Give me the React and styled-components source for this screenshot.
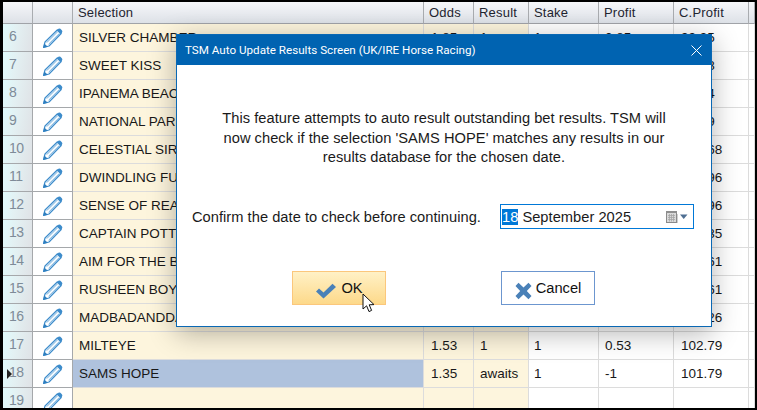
import React from "react";
import styled, { createGlobalStyle } from "styled-components";

const GlobalStyle = createGlobalStyle`
  html, body {
    margin: 0;
    padding: 0;
    background: #000;
  }
  body {
    font-family: "Liberation Sans", Arial, sans-serif;
  }
`;

const COLUMNS = "30px 40px 351px 50px 55px 70px 75px 75px 1fr";

const rows = [
  { n: 6, name: "SILVER CHAMBER", odds: "1.85", result: "1", stake: "1", profit: "0.85", total: "99.95" },
  { n: 7, name: "SWEET KISS", odds: "1.53", result: "1", stake: "1", profit: "0.53", total: "99.48" },
  { n: 8, name: "IPANEMA BEACH", odds: "1.44", result: "1", stake: "1", profit: "0.44", total: "99.94" },
  { n: 9, name: "NATIONAL PARK", odds: "1.45", result: "1", stake: "1", profit: "0.45", total: "99.39" },
  { n: 10, name: "CELESTIAL SIREN", odds: "1.29", result: "1", stake: "1", profit: "0.29", total: "100.68" },
  { n: 11, name: "DWINDLING FUNDS", odds: "1.28", result: "1", stake: "1", profit: "0.28", total: "100.96" },
  { n: 12, name: "SENSE OF REALITY", odds: "1", result: "1", stake: "1", profit: "0", total: "100.96" },
  { n: 13, name: "CAPTAIN POTTER", odds: "1.39", result: "1", stake: "1", profit: "0.39", total: "101.35" },
  { n: 14, name: "AIM FOR THE BEST", odds: "1.26", result: "1", stake: "1", profit: "0.26", total: "101.61" },
  { n: 15, name: "RUSHEEN BOY", odds: "1", result: "1", stake: "1", profit: "0", total: "101.61" },
  { n: 16, name: "MADBADANDDANGEROUS", odds: "1.65", result: "1", stake: "1", profit: "0.65", total: "102.26" },
  { n: 17, name: "MILTEYE", odds: "1.53", result: "1", stake: "1", profit: "0.53", total: "102.79" },
  { n: 18, name: "SAMS HOPE", odds: "1.35", result: "awaits", stake: "1", profit: "-1", total: "101.79", current: true },
  { n: 19, name: "", odds: "", result: "", stake: "", profit: "", total: "" },
];

const Screen = styled.div`
  position: relative;
  box-sizing: border-box;
  width: 757px;
  height: 410px;
  border: solid #000;
  border-width: 2px 2px 2px 3px;
  background: #fff;
  overflow: hidden;
`;

const Row = styled.div`
  display: grid;
  grid-template-columns: ${COLUMNS};
  height: ${(p) => p.$height}px;
`;

const HeadCell = styled.div`
  box-sizing: border-box;
  padding-left: 5px;
  line-height: 21px;
  font-size: 13px;
  letter-spacing: 0.2px;
  color: #1f2530;
  white-space: nowrap;
  overflow: hidden;
  background: linear-gradient(#f6f7fa, #dde1e7);
  border-right: 1px solid #a9acb0;
  border-bottom: 1px solid #a0a3a8;
`;

const NumberCell = styled.div`
  position: relative;
  box-sizing: border-box;
  padding-left: 6px;
  line-height: 25px;
  font-size: 14px;
  letter-spacing: -0.5px;
  color: #7e8b98;
  background: linear-gradient(100deg, #e0fbfd 0%, #e3f0f2 45%, #dfe2e6 100%);
  border-right: 1px solid #a5a8ab;
  border-bottom: 1px solid #a5a8ab;
`;

const Marker = styled.span`
  position: absolute;
  left: 4px;
  top: 9px;
  border-style: solid;
  border-width: 5px 0 5px 5px;
  border-color: transparent transparent transparent #222;
`;

const EditCell = styled.div`
  box-sizing: border-box;
  display: flex;
  justify-content: center;
  padding-top: 4px;
  background: #fff;
  border-right: 1px solid #a5a8ab;
  border-bottom: 1px solid #a5a8ab;
`;

const Cell = styled.div`
  box-sizing: border-box;
  padding-left: ${(p) => p.$pad}px;
  line-height: 28px;
  font-size: 13.5px;
  color: #181818;
  white-space: nowrap;
  overflow: hidden;
  background: ${(p) => (p.$selected ? "#afc2dd" : p.$tinted ? "#fdf5dd" : "#fff")};
  border-right: 1px solid #dcdcdc;
  border-bottom: 1px solid #dcdcdc;
`;

const Dialog = styled.section`
  position: absolute;
  left: 173px;
  top: 32px;
  box-sizing: border-box;
  width: 536px;
  height: 293px;
  background: #fff;
  border: 1px solid #0a68b4;
  box-shadow: 0 6px 26px rgba(0, 0, 0, 0.3);
`;

const TitleBar = styled.header`
  display: flex;
  align-items: center;
  justify-content: space-between;
  height: 30px;
  padding: 0 9px 0 8px;
  background: #0063b1;
  color: #fff;
  font-family: Roboto, "Open Sans", sans-serif;
  font-size: 11.65px;
`;

const Body = styled.div`
  display: flex;
  flex-direction: column;
`;

const Message = styled.p`
  margin: 44px 0 0;
  text-align: center;
  font-size: 14.67px;
  letter-spacing: 0.03px;
  line-height: 19.5px;
  color: #1a1a1a;
`;

const ConfirmRow = styled.div`
  display: flex;
  align-items: center;
  justify-content: space-between;
  margin-top: 36px;
  padding: 0 17px 0 15px;
  font-size: 14.67px;
  letter-spacing: 0.03px;
  color: #1a1a1a;
`;

const ConfirmLabel = styled.span`
  margin-top: 2px;
`;

const DateField = styled.div`
  box-sizing: border-box;
  display: flex;
  align-items: center;
  justify-content: space-between;
  width: 194px;
  height: 25px;
  padding: 2px 0 0 1px;
  border: 1px solid #0078d7;
  font-size: 14.67px;
`;

const Selected = styled.span`
  background: #0078d7;
  color: #fff;
  margin-right: 4px;
`;

const Buttons = styled.div`
  display: flex;
  justify-content: space-between;
  margin-top: 42px;
  padding: 0 116px 0 115px;
`;

const Button = styled.button`
  position: relative;
  box-sizing: border-box;
  display: flex;
  align-items: center;
  justify-content: center;
  gap: 4px;
  width: 94px;
  height: 34px;
  padding: 0;
  font: 14.67px "Liberation Sans", Arial, sans-serif;
  color: #111;
  border: 1px solid ${(p) => (p.$active ? "#fbc77c" : "#6c96cf")};
  background: ${(p) => (p.$active ? "linear-gradient(#fff1c6, #fdd98a)" : "#fff")};
`;

const ButtonIcon = styled.span`
  display: flex;
  margin-top: 6px;
`;

const ButtonLabel = styled.span`
  margin-top: 1px;
`;

const Cursor = styled.svg`
  position: absolute;
  left: 69px;
  top: 21px;
`;

const Pencil = () => (
  <svg width="20" height="20" viewBox="0 0 20 20">
    <path d="M0.5 19.5 L2 14 L14.5 1.8 L18.2 5.5 L6 18 Z" fill="#fff" stroke="#3d8ccb" strokeWidth="1.2" strokeLinejoin="round" />
    <path d="M3.8 14.6 L14.8 3.6 M5.6 16.2 L16.5 5.3" stroke="#5ba1d8" strokeWidth="0.9" />
    <path d="M13.8 2.4 L15.4 0.8 Q16.4 0 17.4 0.8 L19 2.4 Q19.8 3.4 19 4.4 L17.4 6 Z" fill="#3d8ccb" />
    <path d="M0.3 19.7 L1.3 15.4 L4.8 18.8 Z" fill="#2f7fc0" />
  </svg>
);

const CalendarIcon = () => (
  <svg width="28" height="16" viewBox="0 0 28 16">
    <rect x="1.5" y="2.5" width="10" height="11" fill="#dadada" stroke="#8a8a8a" />
    <rect x="1" y="2" width="11" height="2" fill="#8f8f8f" />
    <path d="M3 6.5 H10 M3 8.5 H10 M3 10.5 H10 M4.5 5 V12.5 M6.5 5 V12.5 M8.5 5 V12.5" stroke="#a6a6a6" strokeWidth="0.8" />
    <rect x="12" y="5" width="1" height="9" fill="#cfcfcf" />
    <path d="M15 5.5 H22.5 L18.7 10 Z" fill="#4f6f93" />
  </svg>
);

const CheckIcon = () => (
  <svg width="22" height="16" viewBox="0 0 22 16">
    <path d="M1 8.5 L4 5.5 L8.5 9.5 L17.5 0.8 L21 4 L8.5 15.5 Z" fill="#4a81b8" />
  </svg>
);

const CrossIcon = () => (
  <svg width="17" height="18" viewBox="0 0 17 18">
    <path d="M0.5 4 L3.5 0.8 L8.5 5.5 L13.5 0.8 L16.5 4 L11.8 9 L16.5 14 L13.5 17.2 L8.5 12.5 L3.5 17.2 L0.5 14 L5.2 9 Z" fill="#4a81b8" />
  </svg>
);

const CloseIcon = () => (
  <svg width="11" height="11" viewBox="0 0 11 11">
    <path d="M0.5 0.5 L10.5 10.5 M10.5 0.5 L0.5 10.5" stroke="#fff" strokeWidth="1" />
  </svg>
);

const App = () => (
  <>
    <GlobalStyle />
    <Screen>
      <Row $height={22}>
        <HeadCell />
        <HeadCell />
        <HeadCell>Selection</HeadCell>
        <HeadCell>Odds</HeadCell>
        <HeadCell>Result</HeadCell>
        <HeadCell>Stake</HeadCell>
        <HeadCell>Profit</HeadCell>
        <HeadCell>C.Profit</HeadCell>
        <HeadCell>B</HeadCell>
      </Row>
      {rows.map((row) => (
        <Row $height={28} key={row.n}>
          <NumberCell>
            {row.current && <Marker />}
            {row.n}
          </NumberCell>
          <EditCell>
            <Pencil />
          </EditCell>
          <Cell $pad={6} $selected={row.current} $tinted>{row.name}</Cell>
          <Cell $pad={7} $tinted>{row.odds}</Cell>
          <Cell $pad={6} $tinted>{row.result}</Cell>
          <Cell $pad={5}>{row.stake}</Cell>
          <Cell $pad={6}>{row.profit}</Cell>
          <Cell $pad={7}>{row.total}</Cell>
          <Cell $pad={5} />
        </Row>
      ))}
      <Dialog>
        <TitleBar>
          <span>TSM Auto Update Results Screen (UK/IRE Horse Racing)</span>
          <CloseIcon />
        </TitleBar>
        <Body>
          <Message>
            This feature attempts to auto result outstanding bet results. TSM will
            <br />
            now check if the selection 'SAMS HOPE' matches any results in our
            <br />
            results database for the chosen date.
          </Message>
          <ConfirmRow>
            <ConfirmLabel>Confirm the date to check before continuing.</ConfirmLabel>
            <DateField>
              <span>
                <Selected>18</Selected>September 2025
              </span>
              <CalendarIcon />
            </DateField>
          </ConfirmRow>
          <Buttons>
            <Button $active>
              <ButtonIcon>
                <CheckIcon />
              </ButtonIcon>
              <ButtonLabel>OK</ButtonLabel>
              <Cursor width="14" height="21" viewBox="0 0 14 21">
                <path d="M1 1 V16 L4.6 12.8 L7 18.6 L9.6 17.4 L7.2 11.8 L12 11.6 Z" fill="#fff" stroke="#111" strokeWidth="1" strokeLinejoin="round" />
              </Cursor>
            </Button>
            <Button>
              <ButtonIcon>
                <CrossIcon />
              </ButtonIcon>
              <ButtonLabel>Cancel</ButtonLabel>
            </Button>
          </Buttons>
        </Body>
      </Dialog>
    </Screen>
  </>
);

export default App;
